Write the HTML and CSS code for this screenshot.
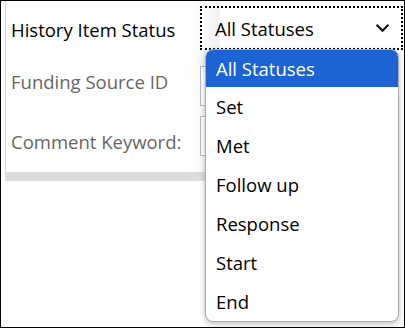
FILE: index.html
```html
<!DOCTYPE html>
<html lang="en">
  <head>
    <meta charset="UTF-8" />
    <title>History Filter</title>
    <link rel="stylesheet" href="styles.css">
  </head>
  <body>
    <div class="frame">
      <!-- Filter panel -->
      <div class="panel">
        <div class="filter-grid">
          <label class="field-label active">History Item Status</label>
          <div class="select-focus">
            <div class="select-box">
              <span>All Statuses</span>
              <svg class="chevron" width="14" height="9" viewBox="0 0 14 9">
                <path d="M1.5 1.5 L7 7 L12.5 1.5" fill="none" stroke="#111" stroke-width="2" />
              </svg>
            </div>
          </div>

          <label class="field-label">Funding Source ID</label>
          <div class="text-input funding"></div>

          <label class="field-label">Comment Keyword:</label>
          <div class="text-input comment"></div>
        </div>
        <div class="scrollbar"></div>
      </div>

      <!-- Open dropdown list -->
      <ul class="dropdown">
        <li class="selected">All Statuses</li>
        <li>Set</li>
        <li>Met</li>
        <li>Follow up</li>
        <li>Response</li>
        <li>Start</li>
        <li>End</li>
      </ul>
    </div>
  </body>
</html>
```

FILE: styles.css
```css
* {
  box-sizing: border-box;
}
html,
body {
  margin: 0;
  height: 100%;
}
body {
  font-family: "Open Sans", "Noto Sans", sans-serif;
  background: #fff;
}
.frame {
  position: relative;
  width: 405px;
  height: 328px;
  border: 1px solid #000;
  overflow: hidden;
  background: #fff;
}
.panel {
  margin-left: 4px;
  width: 215px;
  border-left: 1px solid #d9d9d9;
  background: linear-gradient(to right, #fff 85%, #f2f2f2);
}
.filter-grid {
  display: grid;
  grid-template-columns: 194px 1fr;
  grid-template-rows: 50px 60px 60px;
  align-items: center;
}
.field-label {
  padding-left: 5px;
  font-size: 18.5px;
  color: #666;
  white-space: nowrap;
}
.field-label.active {
  color: #000;
  padding-top: 6px;
}
.select-focus {
  align-self: start;
  margin-top: 5px;
  width: 203px;
  height: 44px;
  border: 2px dotted #000;
  padding: 0;
}
.select-box {
  display: flex;
  align-items: center;
  justify-content: space-between;
  height: 100%;
  padding: 0 11px 0 13px;
  font-size: 18.5px;
  color: #000;
}
.chevron {
  width: 15px;
  height: 10px;
}
.text-input {
  align-self: start;
  width: 20px;
  height: 40px;
  border: 1px solid #bbb;
  border-right: none;
  background: #fff;
}
.text-input.funding {
  margin-top: 15px;
}
.text-input.comment {
  margin-top: 5px;
}
.scrollbar {
  height: 9px;
  margin-top: 1px;
  background: #dcdcdc;
}
.dropdown {
  position: absolute;
  top: 48px;
  left: 204px;
  width: 194px;
  margin: 0;
  padding: 0;
  list-style: none;
  background: #fff;
  border: 1px solid #aaa;
  border-radius: 8px;
  box-shadow: 0 2px 6px rgba(0, 0, 0, 0.25);
  overflow: hidden;
}
.dropdown li {
  height: 39px;
  line-height: 39px;
  padding-left: 10px;
  font-size: 18.5px;
  color: #000;
}
.dropdown li.selected {
  background: #1c63d4;
  color: #fff;
  height: 37px;
  line-height: 37px;
}
```
